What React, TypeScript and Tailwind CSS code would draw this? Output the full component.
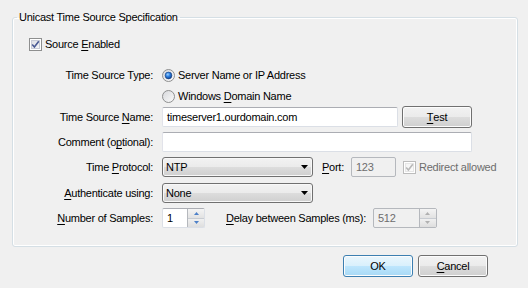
import type { ReactNode } from "react";

function U({ children }: { children: ReactNode }) {
  return <span className="underline underline-offset-[2px] decoration-[1px]">{children}</span>;
}

function CheckBox({ checked, disabled }: { checked?: boolean; disabled?: boolean }) {
  const edge = disabled ? "#bcbcbc" : "#8e8f8f";
  const mark = disabled ? "#b8b8b8" : "#4a5a94";
  return (
    <svg width="13" height="13" viewBox="0 0 13 13" className="shrink-0">
      <defs>
        <linearGradient id={disabled ? "cbd" : "cbe"} x1="0" y1="0" x2="1" y2="1">
          <stop offset="0" stopColor={disabled ? "#f4f4f4" : "#dcdde4"} />
          <stop offset="1" stopColor={disabled ? "#fbfbfb" : "#f7f7f9"} />
        </linearGradient>
      </defs>
      <rect x="0.5" y="0.5" width="12" height="12" fill="#fff" stroke={edge} />
      <rect x="2.5" y="2.5" width="8" height="8" fill={`url(#${disabled ? "cbd" : "cbe"})`} stroke={disabled ? "#e6e6e6" : "#c9ccd8"} />
      {checked && <path d="M3.2 6.4 L5.4 9 L9.8 3.2" fill="none" stroke={mark} strokeWidth="1.6" />}
    </svg>
  );
}

function Radio({ checked }: { checked?: boolean }) {
  return (
    <svg width="13" height="13" viewBox="0 0 13 13" className="shrink-0">
      <defs>
        <linearGradient id="rb" x1="0" y1="0" x2="1" y2="1">
          <stop offset="0" stopColor="#d6d7db" />
          <stop offset="1" stopColor="#fbfbfb" />
        </linearGradient>
        <radialGradient id="rd" cx="0.4" cy="0.35" r="0.7">
          <stop offset="0" stopColor="#9fd3ff" />
          <stop offset="0.45" stopColor="#2c7ee0" />
          <stop offset="1" stopColor="#0b3a86" />
        </radialGradient>
      </defs>
      <circle cx="6.5" cy="6.5" r="6" fill="url(#rb)" stroke="#8e8f8f" />
      {checked && <circle cx="6.5" cy="6.5" r="3.4" fill="url(#rd)" stroke="#1b3f7a" strokeWidth="0.6" />}
    </svg>
  );
}

function TextBox({ value, width, disabled }: { value?: string; width: string; disabled?: boolean }) {
  return (
    <div
      className={`${width} h-[20px] flex items-center px-[4px] rounded-[2px] border ${
        disabled
          ? "bg-[#f0f0f0] border-[#b5b8bd] text-[#6d6d6d]"
          : "bg-white border-[#dbdfe6] border-t-[#abadb3] border-l-[#e2e3ea]"
      }`}
    >
      {value}
    </div>
  );
}

function Combo({ value }: { value: string }) {
  return (
    <div className="w-[151px] h-[20px] flex items-center justify-between pl-[3px] pr-[4px] rounded-[3px] border border-[#707070] bg-[linear-gradient(#f2f2f2_0%,#ebebeb_50%,#dddddd_50%,#cfcfcf_100%)] shadow-[inset_0_0_0_1px_#f8f8f8]">
      <span>{value}</span>
      <svg width="7" height="4" viewBox="0 0 7 4">
        <path d="M0 0 H7 L3.5 4 Z" fill="#000" />
      </svg>
    </div>
  );
}

function Button({ children, primary }: { children: ReactNode; primary?: boolean }) {
  return (
    <button
      className={`w-[70px] h-[22px] rounded-[3px] border flex items-center justify-center shadow-[inset_0_0_0_1px_#fcfcfc] ${
        primary
          ? "border-[#3c7fb1] bg-[linear-gradient(#eaf6fd_0%,#d9f0fc_50%,#bee6fd_50%,#a7d9f5_100%)]"
          : "border-[#707070] bg-[linear-gradient(#f2f2f2_0%,#ebebeb_50%,#dddddd_50%,#cfcfcf_100%)]"
      }`}
    >
      {children}
    </button>
  );
}

function Spin({ value, width, disabled }: { value: string; width: string; disabled?: boolean }) {
  const arrow = disabled ? "#b0b0b0" : "#4d80c8";
  return (
    <div
      className={`${width} h-[20px] flex rounded-[2px] border ${
        disabled ? "bg-[#f0f0f0] border-[#b5b8bd] text-[#6d6d6d]" : "bg-white border-[#dbdfe6] border-t-[#abadb3]"
      }`}
    >
      <div className="flex-1 flex items-center pl-[4px]">{value}</div>
      <div className="w-[17px] flex flex-col border-l border-[#b5b8bd]">
        <div className="flex-1 flex items-center justify-center border-b border-[#c8ccd2] bg-[linear-gradient(#f4f4f4,#e2e2e2)]">
          <svg width="5" height="3" viewBox="0 0 5 3"><path d="M0 3 L2.5 0 L5 3 Z" fill={arrow} /></svg>
        </div>
        <div className="flex-1 flex items-center justify-center bg-[linear-gradient(#f0f0f0,#dedede)]">
          <svg width="5" height="3" viewBox="0 0 5 3"><path d="M0 0 L5 0 L2.5 3 Z" fill={arrow} /></svg>
        </div>
      </div>
    </div>
  );
}

function Row({ label, children, className = "" }: { label?: ReactNode; children: ReactNode; className?: string }) {
  return (
    <div className={`flex items-center h-[20px] ${className}`}>
      <div className="w-[125px] text-right pr-[1px] whitespace-nowrap">{label}</div>
      <div className="ml-[8px] flex items-center">{children}</div>
    </div>
  );
}

export default function App() {
  return (
    <div className="w-[528px] h-[288px] bg-[#f0f0f0] text-black text-[11px] leading-[14px] tracking-[-0.25px] font-['Liberation_Sans',Arial,sans-serif] flex flex-col">
      <fieldset className="ml-[12px] mt-[10px] w-[506px] h-[237px] rounded-[3px] border border-[#d5dfe5] shadow-[inset_0_0_0_1px_#ffffff]">
        <legend className="ml-[4px] px-[2px]">Unicast Time Source Specification</legend>
        <div className="pt-[10px] pl-[16px] flex flex-col">
          <div className="flex items-center h-[20px] gap-[3px]">
            <CheckBox checked />
            <span>
              Source <U>E</U>nabled
            </span>
          </div>

          <Row label="Time Source Type:" className="mt-[11px]">
            <Radio checked />
            <span className="ml-[3px]">Server Name or IP Address</span>
          </Row>
          <Row className="mt-[1px]">
            <Radio />
            <span className="ml-[3px]">
              Windows <U>D</U>omain Name
            </span>
          </Row>

          <Row
            className="mt-[1px]"
            label={
              <>
                Time Source <U>N</U>ame:
              </>
            }
          >
            <TextBox width="w-[236px]" value="timeserver1.ourdomain.com" />
            <div className="ml-[4px]">
              <Button>
                <U>T</U>est
              </Button>
            </div>
          </Row>

          <Row
            className="mt-[5px]"
            label={
              <>
                Comment (o<U>p</U>tional):
              </>
            }
          >
            <TextBox width="w-[310px]" />
          </Row>

          <Row
            className="mt-[5px]"
            label={
              <>
                Time <U>P</U>rotocol:
              </>
            }
          >
            <Combo value="NTP" />
            <span className="ml-[9px]">
              <U>P</U>ort:
            </span>
            <div className="ml-[7px]">
              <TextBox width="w-[45px]" value="123" disabled />
            </div>
            <div className="ml-[7px] flex items-center gap-[3px] text-[#6d6d6d]">
              <CheckBox checked disabled />
              <span>Redirect allowed</span>
            </div>
          </Row>

          <Row
            className="mt-[6px]"
            label={
              <>
                <U>A</U>uthenticate using:
              </>
            }
          >
            <Combo value="None" />
          </Row>

          <Row
            className="mt-[5px]"
            label={
              <>
                <U>N</U>umber of Samples:
              </>
            }
          >
            <Spin width="w-[43px]" value="1" />
            <span className="ml-[21px]">
              <U>D</U>elay between Samples (ms):
            </span>
            <div className="ml-[7px]">
              <Spin width="w-[64px]" value="512" disabled />
            </div>
          </Row>
        </div>
      </fieldset>

      <div className="mt-[8px] flex justify-end gap-[5px] pr-[40px]">
        <Button primary>OK</Button>
        <Button>
          <U>C</U>ancel
        </Button>
      </div>
    </div>
  );
}
